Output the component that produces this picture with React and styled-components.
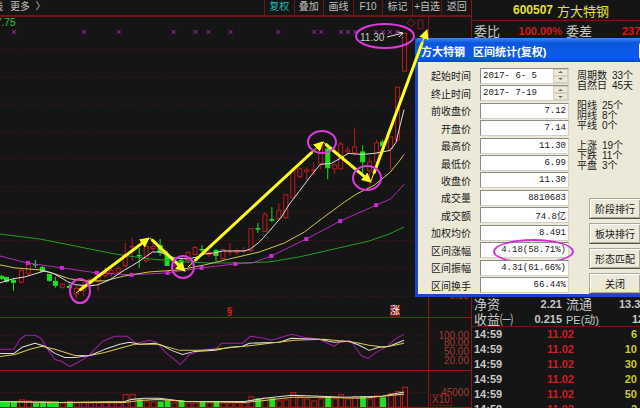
import { useState } from "react";
import styled, { createGlobalStyle, css } from "styled-components";

const GlobalStyle = createGlobalStyle`
  * {
    box-sizing: border-box;
  }
  body {
    margin: 0;
    background: #151515;
    color: #c8c8c8;
    font-family: "Liberation Sans", "Noto Sans CJK SC", sans-serif;
    font-size: 10px;
    overflow: hidden;
  }
  button, input {
    font-family: inherit;
    font-size: inherit;
    margin: 0;
  }
`;

const Page = styled.div`
  position: relative;
  display: grid;
  grid-template-columns: minmax(0, 1fr) 168px;
  height: 100vh;
  overflow: hidden;
`;

const Market = styled.main`
  display: flex;
  flex-direction: column;
  border-right: 1px solid #8c1414;
`;

const Toolbar = styled.nav`
  display: flex;
  justify-content: space-between;
  height: 17px;
  border-bottom: 2px solid #701414;
`;

const ToolGroup = styled.div`
  display: grid;
  grid-template-columns: repeat(7, 1fr);
  width: 207px;
`;

const MoreGroup = styled.div`
  display: flex;
  gap: 7px;
  margin-left: -7px;
`;

const ToolButton = styled.button`
  padding: 0 0 1px;
  border: 0;
  background: none;
  color: ${(p) => (p.$active ? "#22b8b8" : "#c0c0c0")};
  line-height: 12px;
  white-space: nowrap;
  ${ToolGroup} & {
    border-left: 1px solid #701414;
  }
`;

const Panel = styled.section`
  display: grid;
  grid-template-columns: minmax(0, 1fr) 42px;
  flex: ${(p) => p.$size} 1 0;
  min-height: 0;
  border-bottom: 1px solid #a01414;
`;

const Plot = styled.div`
  position: relative;
  min-height: 0;
  border-right: 1px solid #8c1414;
  svg {
    display: block;
    width: 100%;
    height: 100%;
  }
`;

const Axis = styled.div`
  position: relative;
  color: #a83a32;
  text-align: right;
`;

const AxisLabel = styled.span`
  position: absolute;
  right: 2px;
  top: ${(p) => p.$at}%;
  line-height: 10px;
  transform: translateY(-50%);
`;

const Unit = styled.span`
  position: absolute;
  left: 1px;
  bottom: 1px;
  padding: 0 1px;
  border: 1px solid #701414;
  background: #151515;
  line-height: 10px;
`;

const TopValue = styled.span`
  position: absolute;
  left: -4px;
  top: 0;
  color: #2fc43b;
  line-height: 12px;
`;

const Badge = styled.span`
  position: absolute;
  right: 28px;
  bottom: 0;
  width: 10px;
  background: #7a1010;
  color: #fff;
  line-height: 12px;
`;

const Mark = styled.span`
  position: absolute;
  left: 53%;
  bottom: -1px;
  color: #e02020;
  font-weight: bold;
  line-height: 12px;
`;

const Quote = styled.aside`
  display: flex;
  flex-direction: column;
  min-width: 0;
  overflow: hidden;
  white-space: nowrap;
`;

const StockName = styled.h1`
  display: flex;
  align-items: center;
  justify-content: center;
  gap: 4px;
  height: 21px;
  margin: 0;
  padding-left: 10px;
  border-bottom: 1px solid #701414;
  color: #e4e03c;
  font-size: 13px;
  font-weight: normal;
  b {
    font-size: 12px;
  }
`;

const QuoteRow = styled.div`
  display: grid;
  grid-template-columns: 26px 58px 26px 56px;
  column-gap: 4px;
  align-items: center;
  height: ${(p) => (p.$alert ? 17 : 15)}px;
  padding-left: 2px;
  font-size: 13px;
  small {
    font-size: 11px;
  }
  b {
    color: ${(p) => (p.$alert ? "#d01c24" : "#c8c8c8")};
    font-size: 11px;
    text-align: right;
  }
  b:last-child {
    text-align: left;
    padding-left: ${(p) => p.$inset}px;
  }
`;

const QuoteBody = styled.div`
  flex: 1;
  border-top: 1px solid #701414;
`;

const Trades = styled.table`
  width: 100%;
  height: 82px;
  margin-top: 2px;
  flex: none;
  display: block;
  overflow: hidden;
  border-top: 1px solid #701414;
  border-collapse: collapse;
  font-size: 11px;
  font-weight: bold;
  td {
    width: 56px;
    height: 15px;
    padding: 0 0 0 2px;
    line-height: 15px;
  }
  td:nth-child(2) {
    padding-left: 19px;
    width: 52px;
    color: #d01c24;
  }
  td:nth-child(3) {
    width: 57px;
    color: #cccc28;
    text-align: right;
  }
`;

const Annotations = styled.svg`
  position: absolute;
  z-index: 3;
  top: 0;
  right: 168px;
  width: 472px;
  height: 408px;
  overflow: visible;
  pointer-events: none;
`;

const Dialog = styled.section`
  position: absolute;
  z-index: 2;
  top: 38px;
  left: calc(100% - 225px);
  width: 244px;
  border: 3px solid #1648c8;
  border-top: 0;
  background: #ece9d8;
  color: #181818;
  white-space: nowrap;
`;

const TitleBar = styled.header`
  display: flex;
  align-items: center;
  justify-content: space-between;
  height: 24px;
  margin: 0 -3px;
  padding: 2px 3px 0 6px;
  border-radius: 5px 0 0 0;
  background: linear-gradient(#3a8cf4, #0c56dc 20%, #0a5cec 80%, #0848c4);
  color: #fff;
  h2 {
    display: flex;
    gap: 8px;
    margin: 0;
    font-size: 11px;
  }
`;

const CloseButton = styled.button`
  width: 17px;
  height: 18px;
  padding: 0;
  border: 1px solid #fff;
  border-radius: 3px;
  background: #e05030;
  color: #fff;
`;

const DialogBody = styled.div`
  display: grid;
  grid-template-columns: 151px 1fr;
  column-gap: 8px;
  padding: 5px 12px 0 0;
`;

const Fields = styled.div`
  display: grid;
  grid-template-rows: repeat(13, 1fr);
  height: 227px;
`;

const Field = styled.div`
  position: relative;
  display: grid;
  grid-template-columns: 53px 89px;
  column-gap: 9px;
  align-items: center;
  text-align: right;
  ${(p) =>
    p.$marked &&
    css`
      &::after {
        content: "";
        position: absolute;
        right: -5px;
        top: -3px;
        width: 77px;
        height: 21px;
        border: 2px solid #d030d0;
        border-radius: 50%;
        pointer-events: none;
      }
    `}
`;

const FieldBox = styled.div`
  display: flex;
  align-items: center;
  height: 16px;
  border: 1px solid #8c8c84;
  border-right-color: #d4d0c8;
  border-bottom-color: #d4d0c8;
  background: #fff;
`;

const ValueInput = styled.input`
  flex: 1;
  min-width: 0;
  height: 13px;
  padding: 0 2px;
  border: 0;
  outline: 0;
  background: none;
  color: #181818;
  text-align: ${(p) => (p.$date ? "left" : "right")};
  font-family: "Liberation Mono", "Noto Sans CJK SC", monospace;
  font-size: 9px;
`;

const Spinner = styled.span`
  display: grid;
  width: 15px;
  height: 14px;
  button {
    display: grid;
    place-items: center;
    padding: 0;
    border: 1px solid #d4d0c0;
    background: #ece9d8;
  }
`;

const Side = styled.div`
  display: flex;
  flex-direction: column;
  justify-content: space-between;
  align-items: flex-start;
`;

const Stats = styled.div`
  display: grid;
  gap: 10px;
  padding-top: 4px;
  line-height: 10px;
  p {
    margin: 0;
  }
  span {
    margin-left: 5px;
  }
`;

const Actions = styled.div`
  display: grid;
  gap: 4px;
  width: 52px;
  margin-left: 12px;
`;

const ActionButton = styled.button`
  height: 21px;
  padding: 0;
  border: 1px solid;
  border-color: #aaa79c #55534c #55534c #aaa79c;
  background: #ece9d8;
  box-shadow: inset 1px 1px #fff, inset -1px -1px #aca899;
  color: #181818;
`;

const tools = ["复权", "叠加", "画线", "F10", "标记", "+自选", "返回"];

const fields = [
  ["起始时间", "2017- 6- 5"],
  ["终止时间", "2017- 7-19"],
  ["前收盘价", "7.12"],
  ["开盘价", "7.14"],
  ["最高价", "11.30"],
  ["最低价", "6.99"],
  ["收盘价", "11.30"],
  ["成交量", "8810683"],
  ["成交额", "74.8亿"],
  ["加权均价", "8.491"],
  ["区间涨幅", "4.18(58.71%)"],
  ["区间振幅", "4.31(61.66%)"],
  ["区间换手", "66.44%"],
];

const stats = [
  [["周期数", "33个"], ["自然日", "45天"]],
  [["阳线", "25个"], ["阴线", "8个"], ["平线", "0个"]],
  [["上涨", "19个"], ["下跌", "11个"], ["平盘", "3个"]],
];

const actions = ["阶段排行", "板块排行", "形态匹配", "关闭"];
const trades = [6, 10, 30, 20, 50, 2];

// x, open/close top, bottom, high, low, volume top, falling
const candles = [
  [1, 277, 280, 276, 281, 401, 1],
  [6, 278, 283, 278, 284, 401, 1],
  [13, 281, 284, 279, 292, 401, 1],
  [21, 271, 284, 270, 284, 399],
  [28, 265, 275, 263, 277, 400],
  [35, 265, 266, 261, 269, 402, 1],
  [42, 268, 273, 267, 273, 401, 1],
  [49, 275, 282, 275, 283, 401, 1],
  [55, 282, 287, 278, 289, 401, 1],
  [62, 285, 289, 284, 290, 402],
  [69, 287, 289, 285, 290, 401, 1],
  [76, 289, 296, 287, 300, 402],
  [83, 286, 292, 283, 297, 402],
  [90, 280, 287, 279, 288, 402],
  [98, 277, 283, 273, 292, 402],
  [105, 273, 277, 268, 279, 402],
  [111, 271, 275, 269, 278, 402],
  [118, 269, 274, 267, 275, 402],
  [125, 255, 267, 244, 269, 394],
  [132, 247, 247, 239, 262, 394],
  [139, 256, 257, 249, 269, 399, 1],
  [146, 247, 262, 244, 264, 401],
  [153, 247, 250, 242, 252, 401],
  [160, 246, 254, 240, 257, 401, 1],
  [167, 256, 267, 252, 267, 400, 1],
  [174, 262, 267, 260, 269, 402],
  [181, 261, 270, 260, 271, 400, 1],
  [188, 253, 262, 252, 264, 402],
  [195, 248, 256, 247, 257, 402],
  [202, 250, 251, 246, 254, 401, 1],
  [209, 253, 256, 251, 258, 402],
  [216, 251, 257, 250, 262, 401, 1],
  [223, 250, 260, 250, 261, 402],
  [230, 252, 253, 244, 257, 402],
  [237, 251, 254, 250, 256, 402],
  [244, 251, 252, 248, 254, 402],
  [251, 229, 252, 229, 253, 396],
  [258, 229, 230, 224, 234, 398, 1],
  [265, 215, 233, 213, 233, 397],
  [272, 220, 221, 208, 223, 398, 1],
  [279, 211, 220, 204, 222, 400],
  [286, 195, 219, 195, 220, 399],
  [293, 170, 199, 169, 199, 392],
  [300, 169, 178, 168, 179, 396],
  [307, 170, 173, 168, 181, 398],
  [314, 170, 172, 163, 176, 400],
  [321, 143, 165, 142, 170, 398],
  [328, 149, 169, 146, 180, 396, 1],
  [335, 165, 170, 163, 175, 398],
  [341, 144, 170, 142, 170, 394],
  [348, 150, 153, 147, 156, 398],
  [355, 147, 154, 128, 156, 396],
  [363, 152, 163, 146, 176, 396, 1],
  [370, 162, 172, 158, 186, 398],
  [377, 143, 163, 140, 164, 395],
  [383, 142, 147, 140, 150, 397, 1],
  [391, 137, 150, 137, 170, 393],
  [398, 87, 141, 87, 142, 391],
  [405, 33, 72, 33, 72, 387],
];

const crosses = [14, 84, 119, 174, 196, 209, 231, 279, 315, 322, 342, 349, 356, 377, 384, 391, 398];
const nodes = [[28, 264], [62, 269], [97, 274], [132, 276], [168, 274], [202, 269], [236, 265], [272, 257], [307, 240], [341, 222], [377, 206]];

const RED = "#c01c1c";
const GREEN = "#20e020";

const Grid = ({ rows }) =>
  rows.map((y) => (
    <line key={y} x1="0" x2="429" y1={y} y2={y} stroke="#5a1818" strokeDasharray="1 2" />
  ));

const Line = ({ points, color }) => (
  <polyline points={points} fill="none" stroke={color} strokeWidth="1" strokeLinejoin="round" />
);

const PriceChart = () => (
  <svg viewBox="0 17 429 301" preserveAspectRatio="none">
    <Grid rows={[49.5, 77.5, 104.5, 132.5, 159.5, 187.5, 213.5, 241.5, 269.5, 297.5]} />
    {crosses.map((x) => (
      <path key={x} d={`M${x - 2} 30l4 4m0-4l-4 4`} stroke="#a428b0" />
    ))}
    <path d="M412 19l4 4-4 4-4-4zM419 20h5v9h-5z" fill="none" stroke="#8c1818" />
    {candles.map(([x, top, bottom, high, low, , falling]) => (
      <g key={x} stroke={falling ? GREEN : RED} fill={falling ? GREEN : "none"}>
        <path d={`M${x + 0.5} ${high}V${top}M${x + 0.5} ${bottom}V${low}`} />
        <rect x={x - 1.5} y={top + 0.5} width="4" height={Math.max(bottom - top - 1, 0.5)} />
      </g>
    ))}
    <Line color="#22a022" points="0,235 40,240 75,247 115,255 150,260 185,263 210,264 240,264 270,263 300,258 335,250 370,242 390,235 405,228" />
    <Line color="#b02cb8" points="0,257 27,264 62,269 97,274 132,276 168,274 202,269 236,265 253,264 272,257 307,240 341,222 377,206 391,200 398,193 405,185" />
    <Line color="#d0c848" points="0,266 15,269 40,271 55,275 70,280 85,282 105,282 125,277 150,273 180,271 205,266 230,260 260,253 285,244 305,233 322,220 345,203 357,195 375,186 391,173 400,162 405,155" />
    <Line color="#dcdcdc" points="0,284 13,280 25,278 35,275 45,272 52,274 60,278 68,283 76,286 90,287 98,286 110,281 125,271 132,267 140,262 147,257 153,253 160,253 167,256 175,259 188,260 198,258 205,255 215,254 223,252 245,252 251,250 260,243 270,232 282,218 290,205 300,192 312,176 321,165 332,164 341,159 349,154 363,155 375,154 391,151 397,143 400,130 405,110" />
    {nodes.map(([x, y]) => (
      <rect key={x} x={x - 2} y={y - 2} width="4" height="4" fill="#d028d8" />
    ))}
  </svg>
);

const Oscillator = () => (
  <svg viewBox="0 319 429 52" preserveAspectRatio="none">
    <Grid rows={[336.5, 343.5, 352.5, 360.5]} />
    <Line color="#a020a8" points="0,350 14,350 20,340 26,336 35,336 41,339 48,350 55,360 62,362 70,367 78,363 88,357 95,350 103,342 115,337 127,337 137,344 150,341 157,343 167,354 181,365 190,355 205,350 216,350 222,344 243,344 251,337 265,339 272,341 292,335 305,338 320,340 335,347 343,341 352,342 362,356 369,359 377,353 388,347 396,340 405,335" />
    <Line color="#dcdcdc" points="0,354 14,354 22,348 35,344 45,347 55,354 65,358 75,358 90,356 105,350 120,345 130,343 140,345 155,344 162,346 172,351 183,355 195,352 216,351 230,348 243,347 250,344 280,343 292,339 320,340 335,343 350,342 360,346 370,351 380,348 390,347 405,341" />
    <Line color="#d8c850" points="0,357 15,355 30,350 42,347 55,350 75,356 90,356 105,353 120,349 135,345 158,345 180,351 205,351 245,347 270,344 295,341 325,340 355,343 370,346 385,348 405,344" />
  </svg>
);

const VolumeChart = () => (
  <svg viewBox="0 372 429 34" preserveAspectRatio="none">
    <Grid rows={[392.5]} />
    {candles.map(([x, , , , , top, falling]) => (
      <rect key={x} x={x - 1.5} y={top + 0.5} width="5" height={406 - top} stroke={falling ? GREEN : RED} fill={falling ? GREEN : "none"} />
    ))}
    <Line color="#dcdcdc" points="0,401 60,402 125,401 132,399 145,398 160,398 185,401 245,401 265,398 293,395 320,396 345,397 383,396 405,392" />
    <Line color="#e0c860" points="0,401 60,402 125,402 140,400 160,399 185,401 245,402 265,400 293,397 320,397 363,398 383,396 405,394" />
  </svg>
);

const arrows = [
  [76, 293, 149, 238],
  [150, 238, 185, 271],
  [188, 267, 323, 142],
  [323, 142, 371, 182],
  [371, 181, 427, 30],
];

const rings = [[80, 291, 10, 12], [183, 267, 11, 11], [322, 142, 14, 11], [367, 178, 14, 12], [385, 36, 29, 12]];

const Drawings = () => (
  <Annotations viewBox="0 0 472 408">
    <defs>
      <marker id="head" markerUnits="userSpaceOnUse" markerWidth="12" markerHeight="10" refX="9" refY="5" orient="auto">
        <path d="M0 0L10 5 0 10z" fill="#ffff20" />
      </marker>
    </defs>
    {arrows.map(([x1, y1, x2, y2]) => (
      <g key={x1}>
        <line x1={x1} y1={y1} x2={x2} y2={y2} stroke="#ffff20" strokeWidth="1" markerEnd="url(#head)" />
        <line x1={x1 + (x2 - x1) * 0.05} y1={y1 + (y2 - y1) * 0.05} x2={x2 - (x2 - x1) * 0.08} y2={y2 - (y2 - y1) * 0.08} stroke="#ffff20" strokeWidth="3" />
      </g>
    ))}
    {rings.map(([cx, cy, rx, ry]) => (
      <ellipse key={cx} cx={cx} cy={cy} rx={rx} ry={ry} fill="none" stroke="#e038e0" strokeWidth="2" />
    ))}
    <text x="360" y="41" fill="#c8c8c8" fontSize="10">11.30</text>
    <path d="M387 37l16-4m-5-1l5 1-4 4" fill="none" stroke="#dcdcdc" />
  </Annotations>
);

const StatField = ({ id, label, initial, date, marked }) => {
  const [value, setValue] = useState(initial);
  return (
    <Field $marked={marked}>
      <label htmlFor={id}>{label}</label>
      <FieldBox>
        <ValueInput id={id} $date={date} value={value} onChange={(e) => setValue(e.target.value)} />
        {date && (
          <Spinner>
            <button type="button" aria-label="+">
              <svg width="5" height="2"><path d="M0 2L2.5 0 5 2z" fill="#6c6a60" /></svg>
            </button>
            <button type="button" aria-label="-">
              <svg width="5" height="2"><path d="M0 0L2.5 2 5 0z" fill="#6c6a60" /></svg>
            </button>
          </Spinner>
        )}
      </FieldBox>
    </Field>
  );
};

const StatsDialog = () => (
  <Dialog>
    <TitleBar>
      <h2><span>方大特钢</span><span>区间统计(复权)</span></h2>
      <CloseButton type="button">×</CloseButton>
    </TitleBar>
    <DialogBody>
      <Fields>
        {fields.map(([label, value], i) => (
          <StatField key={label} id={`field-${i}`} label={label} initial={value} date={i < 2} marked={label === "区间涨幅"} />
        ))}
      </Fields>
      <Side>
        <Stats>
          {stats.map((group) => (
            <div key={group[0][0]}>
              {group.map(([name, count]) => (
                <p key={name}>{name}<span>{count}</span></p>
              ))}
            </div>
          ))}
        </Stats>
        <Actions>
          {actions.map((name) => (
            <ActionButton type="button" key={name}>{name}</ActionButton>
          ))}
        </Actions>
      </Side>
    </DialogBody>
  </Dialog>
);

const App = () => (
  <>
    <GlobalStyle />
    <Page>
      <Market>
        <Toolbar>
          <MoreGroup>
            <ToolButton type="button">线</ToolButton>
            <ToolButton type="button">更多 &nbsp;〉</ToolButton>
          </MoreGroup>
          <ToolGroup>
            {tools.map((name, i) => (
              <ToolButton type="button" key={name} $active={i === 0}>{name}</ToolButton>
            ))}
          </ToolGroup>
        </Toolbar>
        <Panel $size={302}>
          <Plot>
            <PriceChart />
            <TopValue>7.75</TopValue>
            <Mark>§</Mark>
            <Badge>涨</Badge>
          </Plot>
          <Axis>
            <AxisLabel $at={93}>6.00</AxisLabel>
          </Axis>
        </Panel>
        <Panel $size={53}>
          <Plot><Oscillator /></Plot>
          <Axis>
            <AxisLabel $at={34}>100.00</AxisLabel>
            <AxisLabel $at={48}>80.00</AxisLabel>
            <AxisLabel $at={66}>50.00</AxisLabel>
            <AxisLabel $at={82}>20.00</AxisLabel>
          </Axis>
        </Panel>
        <Panel $size={36}>
          <Plot><VolumeChart /></Plot>
          <Axis>
            <AxisLabel $at={60}>45000</AxisLabel>
            <Unit>X10</Unit>
          </Axis>
        </Panel>
      </Market>
      <Quote>
        <StockName><b>600507</b>方大特钢</StockName>
        <QuoteRow $alert $inset={26}>
          <span>委比</span><b>100.00%</b><span>委差</span><b>237</b>
        </QuoteRow>
        <QuoteBody />
        <QuoteRow $inset={23}>
          <span>净资</span><b>2.21</b><span>流通</span><b>13.3</b>
        </QuoteRow>
        <QuoteRow $inset={36}>
          <span>收益㈠</span><b>0.215</b><small>PE(动)</small><b>12</b>
        </QuoteRow>
        <Trades>
          <tbody>
            {trades.map((volume) => (
              <tr key={volume}>
                <td>14:59</td>
                <td>11.02</td>
                <td>{volume}</td>
              </tr>
            ))}
          </tbody>
        </Trades>
      </Quote>
      <Drawings />
      <StatsDialog />
    </Page>
  </>
);

export default App;
